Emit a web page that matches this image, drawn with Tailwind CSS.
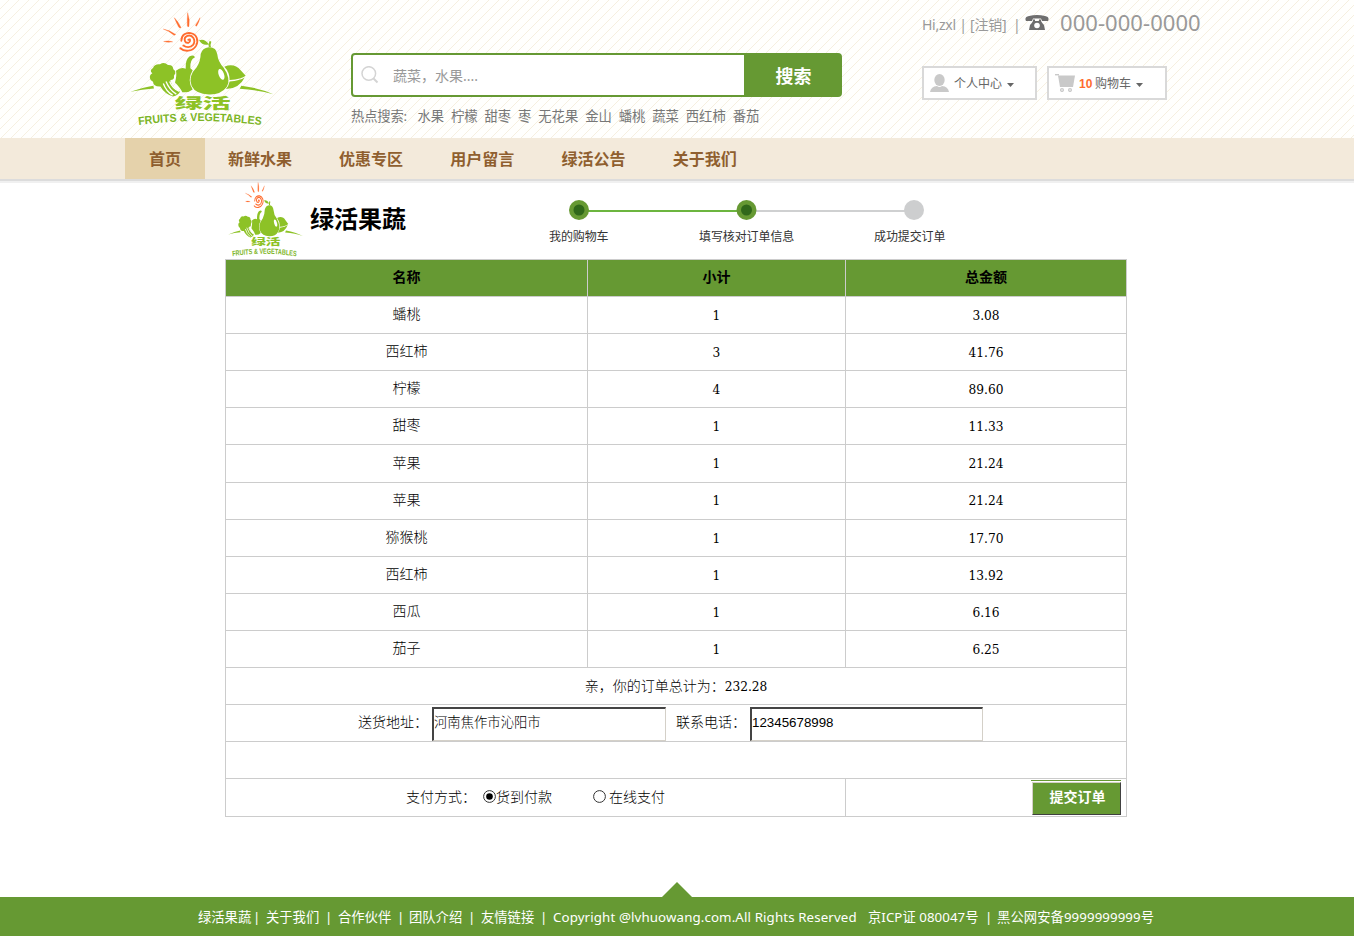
<!DOCTYPE html>
<html lang="zh-CN">
<head>
<meta charset="utf-8">
<title>绿活果蔬</title>
<script src="https://cdn.jsdelivr.net/npm/@tailwindcss/browser@4"></script>
</head>
<body class="w-[1354px] h-[936px] overflow-hidden bg-white flex flex-col font-['Noto_Sans','Noto_Sans_CJK_SC',sans-serif]">
<svg class="hidden">
  <symbol id="logo" viewBox="30 36 432 340" preserveAspectRatio="none">
    <g fill="#ff6c2f" stroke="#ff6c2f" stroke-width="1">
      <path d="M131 124 Q144 120 158 125 Q144 128 131 124ZM130 87 Q148 90 167 103 Q164 107 160 104 Q147 92 130 87ZM163 53 Q176 66 183 82 Q180 86 176 81 Q168 66 163 53ZM203 38 Q210 58 207 79 Q203 82 202 77 Q201 57 203 38ZM240 53 Q237 67 230 78 Q226 79 227 75 Q233 66 240 53Z"/>
    </g>
    <path fill="none" stroke="#ff6c2f" stroke-linecap="round" stroke-width="5.5" d="M205 119 C211 114 213 125 205 128 C193 130 189 112 202 107 C218 102 229 120 219 134 C211 143 198 141 190 136M184 122 C184 103 199 97 212 99 C230 102 237 121 228 137 C217 155 193 155 181 144"/>
    <g fill="#8dc226">
      <path d="M32 274 Q70 260 100 256 L102 264 Q66 266 32 274Z"/>
      <path d="M460 281 Q420 263 364 256 L359 265 Q420 269 460 281Z"/>
      <path d="M92 239 Q85 226 97 219 Q87 210 99 203 Q104 190 120 192 Q132 184 144 194 Q159 193 160 207 Q171 213 162 226 Q164 239 151 239 L152 244 Q160 266 180 273 Q176 284 159 288 Q134 280 121 258 Q100 259 99 244Z"/>
      <path d="M168 211 Q182 199 197 205 Q196 178 208 169 Q221 161 225 171 Q209 178 211 204 L218 210 Q200 240 218 267 Q204 278 187 275 Q181 262 165 246 Q171 224 168 211Z"/>
      <path d="M266 141 Q289 140 292 163 Q294 185 311 202 Q335 237 320 260 Q303 283 267 282 Q227 281 215 257 Q203 228 230 201 Q242 182 242 161 Q247 143 266 141Z"/>
      <path d="M266 140 Q264 132 269 122 L274 125 Q270 134 273 142ZM237 120 Q255 114 266 132 Q249 138 237 120Z"/>
      <path d="M313 199 Q343 187 362 210 L377 226 Q365 236 329 239 Q329 215 313 199Z"/>
      <path d="M329 243 Q360 240 374 231 Q358 264 318 266 Q326 256 329 243Z"/>
    </g>
    <path fill="none" stroke="#fff" stroke-width="4" d="M130 249 Q138 272 158 284M138 243 Q149 269 169 281M149 243 Q157 263 178 273"/>
    <ellipse cx="304" cy="222" rx="8" ry="17" fill="#fff" transform="rotate(-20 304 222)"/>
    <text x="164" y="321" textLength="168" lengthAdjust="spacingAndGlyphs" font-size="41" font-weight="900" fill="#8dc226" font-family="Noto Sans CJK SC, sans-serif">绿活</text>
    <path id="arc" fill="none" d="M56 373 Q240 349 428 374"/>
    <text font-size="34" font-weight="700" fill="#7cb526" font-family="Liberation Sans Narrow, Liberation Sans, sans-serif"><textPath href="#arc" textLength="369" lengthAdjust="spacingAndGlyphs">FRUITS &amp; VEGETABLES</textPath></text>
  </symbol>
</svg>

<header class="h-[138px] shrink-0 flex items-start pl-[130px] bg-[#fffffd] bg-[repeating-linear-gradient(135deg,transparent_0px,transparent_6px,#f6efdf_6.4px,#f6efdf_6.8px,transparent_7.07px)]">
  <svg class="w-[144px] h-[114px] mt-3 shrink-0"><use href="#logo"/></svg>
  <div class="ml-[77px] mt-[53px] w-[491px] shrink-0">
    <div class="h-[44px] flex border-2 border-[#669933] rounded bg-white">
      <div class="flex-1 flex items-center pl-2">
        <svg class="w-[18px] h-[18px]" viewBox="0 0 18 18" fill="none" stroke="#d4d4d4"><circle cx="7.8" cy="7.5" r="6.8" stroke-width="1.5"/><path d="M12.5 12.5L16.5 16.5" stroke-width="2"/></svg>
        <span class="ml-[14px] mt-px text-[14px] leading-5 text-[#999]">蔬菜，水果....</span>
      </div>
      <button class="w-[96px] pl-[3px] pt-0.5 bg-[#669933] text-white font-bold text-[18px]">搜索</button>
    </div>
    <div class="mt-[9px] flex gap-[6.9px] text-[13.33px] leading-5 text-[#777] whitespace-nowrap">
      <span class="w-[59.5px] tracking-[-0.2px]">热点搜索:</span><span>水果</span><span>柠檬</span><span>甜枣</span><span>枣</span><span>无花果</span><span>金山</span><span>蟠桃</span><span>蔬菜</span><span>西红柿</span><span>番茄</span>
    </div>
  </div>
  <div class="ml-[80px] mt-[9px] w-[290px]">
    <div class="h-7 flex items-center whitespace-nowrap text-[#999]">
      <span class="w-[103px] text-[14px] pt-0.5 whitespace-pre tracking-[-0.25px]">Hi,zxl | [注销]  |</span>
      <svg class="w-6 h-4" viewBox="0 0 24 16"><path fill="#6e6e6e" d="M1 6Q-1 2 4 1Q12-1 20 1Q25 2 23 6H17L16 3.6H8L7 6ZM8 4.5H10V6H14V4.5H16V6Q17 8 19 10L20 15H4L5 10Q7 8 8 6Z"/><circle cx="12" cy="10.5" r="2.8" fill="#fff"/></svg>
      <span class="ml-[11px] text-[22px] leading-7 pb-0.5 tracking-[0.06px]">000-000-0000</span>
    </div>
    <div class="mt-[29px] flex gap-[10px] text-[12px] text-[#666]">
      <div class="w-[115px] h-[34px] border-2 border-[#d9d9d9] bg-white flex items-center pl-[6px]">
        <svg class="w-[19px] h-[18px]" viewBox="0 0 19 18" fill="#c9c9c9"><ellipse cx="9.5" cy="6" rx="5.2" ry="6"/><path d="M0 18Q1 12.5 7 12Q9.500 14 12 12Q18 12.500 19 18Z"/></svg>
        <span class="ml-[5px] mt-0.5">个人中心</span>
        <svg class="ml-[5px] mt-1 w-[7px] h-1" viewBox="0 0 7 4"><path fill="#666" d="M0 0H7L3.500 4Z"/></svg>
      </div>
      <div class="w-[120px] h-[34px] border-2 border-[#d9d9d9] bg-white flex items-center pl-[6px]">
        <svg class="w-5 h-[18px]" viewBox="0 0 20 18"><path fill="#c9c9c9" d="M3 1.500H20L18 13H5Z"/><path d="M0 .7H4" stroke="#c9c9c9" stroke-width="1.4"/><g fill="#fff" stroke="#c9c9c9" stroke-width="1.3"><circle cx="7" cy="16" r="1.4"/><circle cx="15" cy="16" r="1.4"/></g></svg>
        <b class="ml-1 mt-0.5 w-4 text-[#ff6c2f] font-['Liberation_Sans']">10</b>
        <span class="mt-0.5">购物车</span>
        <svg class="ml-[5px] mt-1 w-[7px] h-1" viewBox="0 0 7 4"><path fill="#666" d="M0 0H7L3.500 4Z"/></svg>
      </div>
    </div>
  </div>
</header>

<nav class="h-[41px] shrink-0 bg-[#f3eadb] pl-[125px] flex text-[16px] font-bold leading-[43px] text-[#8f5f2f] shadow-[0_2px_0_#dcdcdc,0_4px_0_#f0f0f0]">
  <a class="w-[80px] h-[41px] mr-[-0.7px] text-center bg-[#e5d2ab]">首页</a>
  <a class="px-[23.6px]">新鲜水果</a><a class="px-[23.6px]">优惠专区</a><a class="px-[23.6px]">用户留言</a><a class="px-[23.6px]">绿活公告</a><a class="px-[23.6px]">关于我们</a>
</nav>

<main class="ml-[225px] w-[902px] h-[718px] shrink-0">
  <div class="h-[80px] flex items-start">
    <svg class="ml-[3px] mt-[3px] w-[75px] h-[75px]"><use href="#logo"/></svg>
    <h1 class="ml-[7px] mt-[22px] w-[239px] text-[24px] leading-9 font-bold text-black">绿活果蔬</h1>
    <div class="mt-[21px] w-[397px] text-[12px] text-[#333]">
      <svg class="ml-5 w-[356px] h-5" viewBox="0 0 356 20"><path stroke="#6cb53f" stroke-width="2" d="M18 11H168"/><path stroke="#cfd0d1" stroke-width="2" d="M186 11H338"/><circle cx="10" cy="10" r="10" fill="#669933"/><circle cx="10" cy="10" r="5.500" fill="#30681a"/><circle cx="177.500" cy="10" r="10" fill="#669933"/><circle cx="177.500" cy="10" r="5.500" fill="#30681a"/><circle cx="345" cy="10" r="10" fill="#cdcecf"/></svg>
      <div class="flex mt-2 leading-[18px] tracking-[-0.1px]"><span class="w-[150px]">我的购物车</span><span class="w-[175px]">填写核对订单信息</span><span>成功提交订单</span></div>
    </div>
  </div>
  <table class="w-[902px] table-fixed border-separate border-spacing-0 border-l border-t border-[#ccc] text-center text-[14px] leading-5 text-black font-light font-['DejaVu_Serif','Noto_Sans_CJK_SC',serif]">
    <colgroup><col class="w-[362px]"><col class="w-[258px]"><col class="w-[281px]"></colgroup>
    <thead class="bg-[#669933]"><tr class="h-[37px] *:border-r *:border-b *:border-[#ccc] *:p-0 *:pb-0.5 *:font-bold"><th>名称</th><th>小计</th><th>总金额</th></tr></thead>
    <tbody class="**:[td]:border-r **:[td]:border-b **:[td]:border-[#ccc] **:[td]:p-0">
      <tr class="h-[37px]"><td><div class="-mt-0.5">蟠桃</div></td><td class="text-[12.2px] font-normal"><div class="mt-0.5">1</div></td><td class="text-[12.2px] font-normal"><div class="mt-0.5">3.08</div></td></tr>
      <tr class="h-[37px]"><td><div class="-mt-0.5">西红柿</div></td><td class="text-[12.2px] font-normal"><div class="mt-0.5">3</div></td><td class="text-[12.2px] font-normal"><div class="mt-0.5">41.76</div></td></tr>
      <tr class="h-[37px]"><td><div class="-mt-0.5">柠檬</div></td><td class="text-[12.2px] font-normal"><div class="mt-0.5">4</div></td><td class="text-[12.2px] font-normal"><div class="mt-0.5">89.60</div></td></tr>
      <tr class="h-[37px]"><td><div class="-mt-0.5">甜枣</div></td><td class="text-[12.2px] font-normal"><div class="mt-0.5">1</div></td><td class="text-[12.2px] font-normal"><div class="mt-0.5">11.33</div></td></tr>
      <tr class="h-[38px]"><td><div class="-mt-0.5">苹果</div></td><td class="text-[12.2px] font-normal">1</td><td class="text-[12.2px] font-normal">21.24</td></tr>
      <tr class="h-[37px]"><td><div class="-mt-0.5">苹果</div></td><td class="text-[12.2px] font-normal">1</td><td class="text-[12.2px] font-normal">21.24</td></tr>
      <tr class="h-[37px]"><td><div class="-mt-0.5">猕猴桃</div></td><td class="text-[12.2px] font-normal"><div class="mt-0.5">1</div></td><td class="text-[12.2px] font-normal"><div class="mt-0.5">17.70</div></td></tr>
      <tr class="h-[37px]"><td><div class="-mt-0.5">西红柿</div></td><td class="text-[12.2px] font-normal"><div class="mt-0.5">1</div></td><td class="text-[12.2px] font-normal"><div class="mt-0.5">13.92</div></td></tr>
      <tr class="h-[37px]"><td><div class="-mt-0.5">西瓜</div></td><td class="text-[12.2px] font-normal"><div class="mt-0.5">1</div></td><td class="text-[12.2px] font-normal"><div class="mt-0.5">6.16</div></td></tr>
      <tr class="h-[37px]"><td><div class="-mt-0.5">茄子</div></td><td class="text-[12.2px] font-normal"><div class="mt-0.5">1</div></td><td class="text-[12.2px] font-normal"><div class="mt-0.5">6.25</div></td></tr>
      <tr class="h-[37px]"><td colspan="3">亲，你的订单总计为：<span class="text-[12.2px] font-normal">232.28</span></td></tr>
      <tr class="h-[37px]"><td colspan="3">
        <div class="h-9 flex items-center pl-[132px] text-left">
          <span class="w-[74px] pb-0.5 whitespace-nowrap">送货地址：</span>
          <div class="mt-[2px] w-[234px] h-[34px] border-t-2 border-l-2 border-t-[#444] border-l-[#444] border-r border-b border-r-[#d4d0c8] border-b-[#d4d0c8] text-[13.33px] leading-[28px] whitespace-nowrap">河南焦作市沁阳市</div>
          <span class="ml-[10px] w-[74px] pb-0.5 whitespace-nowrap">联系电话：</span>
          <div class="mt-[2px] w-[233px] h-[34px] border-t-2 border-l-2 border-t-[#444] border-l-[#444] border-r border-b border-r-[#d4d0c8] border-b-[#d4d0c8] text-[13.33px] leading-[28px] font-normal font-['Liberation_Sans']">12345678998</div>
        </div></td></tr>
      <tr class="h-[37px]"><td colspan="3"></td></tr>
      <tr class="h-[38px]"><td colspan="2">
        <div class="h-9 flex items-center pl-[180px] pb-0.5 whitespace-nowrap">
          <span class="w-[77px] text-left">支付方式：</span>
          <svg class="w-[13px] h-[13px]" viewBox="0 0 13 13"><circle cx="6.500" cy="6.500" r="5.900" fill="#fff" stroke="#333"/><circle cx="6.500" cy="6.500" r="3.300"/></svg>
          <span class="w-[97px] text-left">货到付款</span>
          <svg class="w-[13px] h-[13px]" viewBox="0 0 13 13"><circle cx="6.500" cy="6.500" r="5.900" fill="#fff" stroke="#333"/></svg>
          <span class="ml-[3px]">在线支付</span>
        </div></td><td>
        <div class="h-9 flex justify-end pr-[5px]">
          <div class="w-[90px] h-[35px] bg-[linear-gradient(#669933,#669933)] bg-[length:90px_1px] bg-no-repeat pt-[2px] pl-px">
            <button class="block w-[89px] h-[33px] bg-[#669933] border border-t-[#d4d0c8] border-l-[#d4d0c8] border-r-[#404040] border-b-[#404040] text-white font-bold text-[14px] leading-[28px] pl-0.5 pb-0.5">提交订单</button>
          </div>
        </div></td></tr>
    </tbody>
  </table>
</main>

<footer class="relative h-[39px] shrink-0 bg-[#669933] pl-[198px] flex text-[13.3px] leading-[41px] text-white whitespace-nowrap">
  <svg class="absolute left-[662px] top-[-15px] w-[30px] h-[15px]" viewBox="0 0 30 15"><path fill="#669933" d="M0 15L15 0L30 15Z"/></svg>
  <span class="w-[55px]">绿活果蔬</span><span class="w-[13px]">|</span><span class="w-[59px]">关于我们</span><span class="w-[13px]">|</span><span class="w-[59px]">合作伙伴</span><span class="w-[12px]">|</span><span class="w-[59px]">团队介绍</span><span class="w-[13px]">|</span><span class="w-[59px]">友情链接</span><span class="w-[13px]">|</span><span class="w-[315px] tracking-[0.12px]">Copyright @lvhuowang.com.All Rights Reserved</span><span class="w-[117px] tracking-[0.05px]">京ICP证 080047号</span><span class="w-[12px]">|</span><span class="tracking-[0.08px]">黑公网安备9999999999号</span>
</footer>
</body>
</html>
